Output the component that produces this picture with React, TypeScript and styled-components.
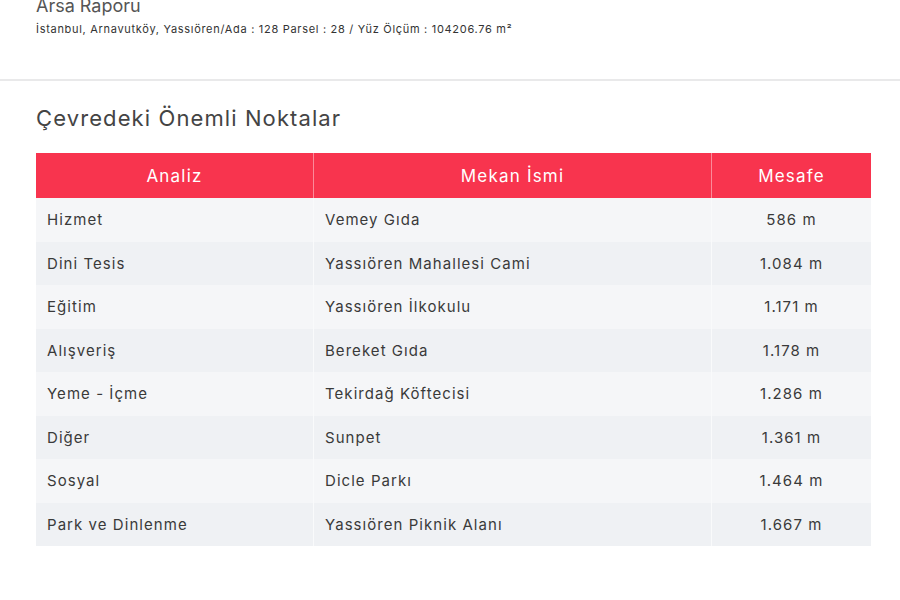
import React from "react";
import styled, { createGlobalStyle } from "styled-components";

const Global = createGlobalStyle`
  html, body { margin: 0; padding: 0; background: #fff; }
  body { font-family: Inter, "Noto Sans", sans-serif; }
`;

const Page = styled.div`
  width: 900px;
  height: 600px;
  overflow: hidden;
  background: #fff;
`;

const Header = styled.header`
  padding: 0 36px;
  margin-top: -6px;
  height: 87px;
  box-sizing: border-box;
  border-bottom: 2px solid #e9e9ea;
`;

const Title = styled.h1`
  margin: 0;
  font-size: 18px;
  font-weight: 400;
  line-height: 24px;
  color: #555;
`;

const Sub = styled.div`
  font-size: 11px;
  letter-spacing: 0.7px;
  line-height: 14px;
  color: #333;
  margin-top: 4px;
`;

const Section = styled.section`
  padding: 21px 29px 0 36px;
`;

const Heading = styled.h2`
  margin: 0 0 19px;
  font-size: 22px;
  font-weight: 400;
  letter-spacing: 1.1px;
  line-height: 32px;
  color: #444;
`;

const Table = styled.table`
  width: 833px;
  border-collapse: collapse;
  table-layout: fixed;
`;

const Th = styled.th<{ $w: number }>`
  width: ${(p) => p.$w}px;
  height: 45px;
  padding: 0;
  background: #f8344e;
  color: #fff;
  font-size: 17px;
  font-weight: 400;
  letter-spacing: 1.2px;
  text-align: center;
  border-left: 1px solid #fb8a99;
  &:first-child { border-left: none; }
`;

const Tr = styled.tr<{ $odd: boolean }>`
  height: 43.5px;
  background: ${(p) => (p.$odd ? "#f5f6f8" : "#eff1f4")};
`;

const Td = styled.td<{ $center?: boolean }>`
  padding: 0 11px;
  font-size: 15px;
  letter-spacing: 1.05px;
  color: #3a3a3a;
  text-align: ${(p) => (p.$center ? "center" : "left")};
  border-left: 1px solid #f9fafb;
  &:first-child { border-left: none; }
`;

const rows = [
  ["Hizmet", "Vemey Gıda", "586 m"],
  ["Dini Tesis", "Yassıören Mahallesi Cami", "1.084 m"],
  ["Eğitim", "Yassıören İlkokulu", "1.171 m"],
  ["Alışveriş", "Bereket Gıda", "1.178 m"],
  ["Yeme - İçme", "Tekirdağ Köftecisi", "1.286 m"],
  ["Diğer", "Sunpet", "1.361 m"],
  ["Sosyal", "Dicle Parkı", "1.464 m"],
  ["Park ve Dinlenme", "Yassıören Piknik Alanı", "1.667 m"],
];

export default function App() {
  return (
    <Page>
      <Global />
      <Header>
        <Title>Arsa Raporu</Title>
        <Sub>İstanbul, Arnavutköy, Yassıören/Ada : 128 Parsel : 28 / Yüz Ölçüm : 104206.76 m²</Sub>
      </Header>
      <Section>
        <Heading>Çevredeki Önemli Noktalar</Heading>
        <Table>
          <thead>
            <tr>
              <Th $w={277}>Analiz</Th>
              <Th $w={397}>Mekan İsmi</Th>
              <Th $w={159}>Mesafe</Th>
            </tr>
          </thead>
          <tbody>
            {rows.map((r, i) => (
              <Tr key={i} $odd={i % 2 === 0}>
                <Td>{r[0]}</Td>
                <Td>{r[1]}</Td>
                <Td $center>{r[2]}</Td>
              </Tr>
            ))}
          </tbody>
        </Table>
      </Section>
    </Page>
  );
}
